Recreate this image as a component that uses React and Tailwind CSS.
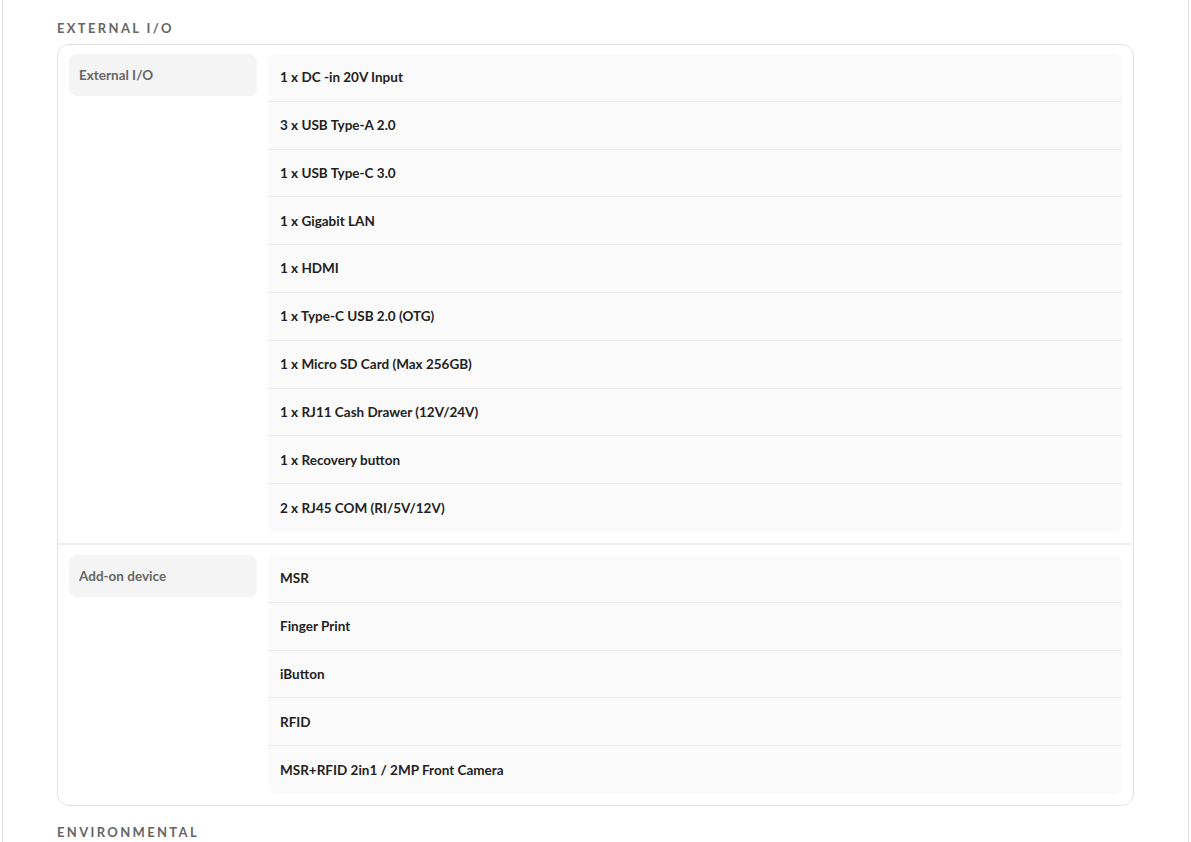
const sections = [
  {
    label: "External I/O",
    items: [
      "1 x DC -in 20V Input",
      "3 x USB Type-A 2.0",
      "1 x USB Type-C 3.0",
      "1 x Gigabit LAN",
      "1 x HDMI",
      "1 x Type-C USB 2.0 (OTG)",
      "1 x Micro SD Card (Max 256GB)",
      "1 x RJ11 Cash Drawer (12V/24V)",
      "1 x Recovery button",
      "2 x RJ45 COM (RI/5V/12V)",
    ],
  },
  {
    label: "Add-on device",
    items: ["MSR", "Finger Print", "iButton", "RFID", "MSR+RFID 2in1 / 2MP Front Camera"],
  },
];

export default function App() {
  return (
    <div
      className="h-[842px] overflow-hidden bg-white mx-[2px] border-x border-[#e0e0e0]"
      style={{ fontFamily: '"Source Sans Pro", Lato, "Liberation Sans", sans-serif' }}
    >
      <div className="pl-[54px] pr-[54px]">
        <h2 className="pt-[19px] h-[44px] text-[13px] font-bold tracking-[0.18em] text-[#666]">EXTERNAL I/O</h2>
        <div className="border border-[#e2e2e2] rounded-[12px]">
          {sections.map((s, i) => (
            <div key={s.label} className={"flex gap-[11px] p-[11px] pt-[9px] " + (i ? "border-t-2 border-[#efefef] pt-[10px]" : "")}>
              <div className="w-[188px] h-[42px] rounded-[8px] bg-[#f4f4f4] px-[10px] pt-[11px] text-[13.5px] font-bold text-[#666]">
                {s.label}
              </div>
              <div className="flex-1 rounded-[8px] bg-[#fafafa]">
                {s.items.map((t, j) => (
                  <div
                    key={t}
                    className={"h-[47.8px] flex items-center px-3 text-[13.5px] font-bold text-[#222] " + (j < s.items.length - 1 ? "border-b border-[#ececec]" : "")}
                  >
                    {t}
                  </div>
                ))}
              </div>
            </div>
          ))}
        </div>
        <h2 className="pt-[17px] text-[13px] font-bold tracking-[0.18em] text-[#666]">ENVIRONMENTAL</h2>
      </div>
    </div>
  );
}
